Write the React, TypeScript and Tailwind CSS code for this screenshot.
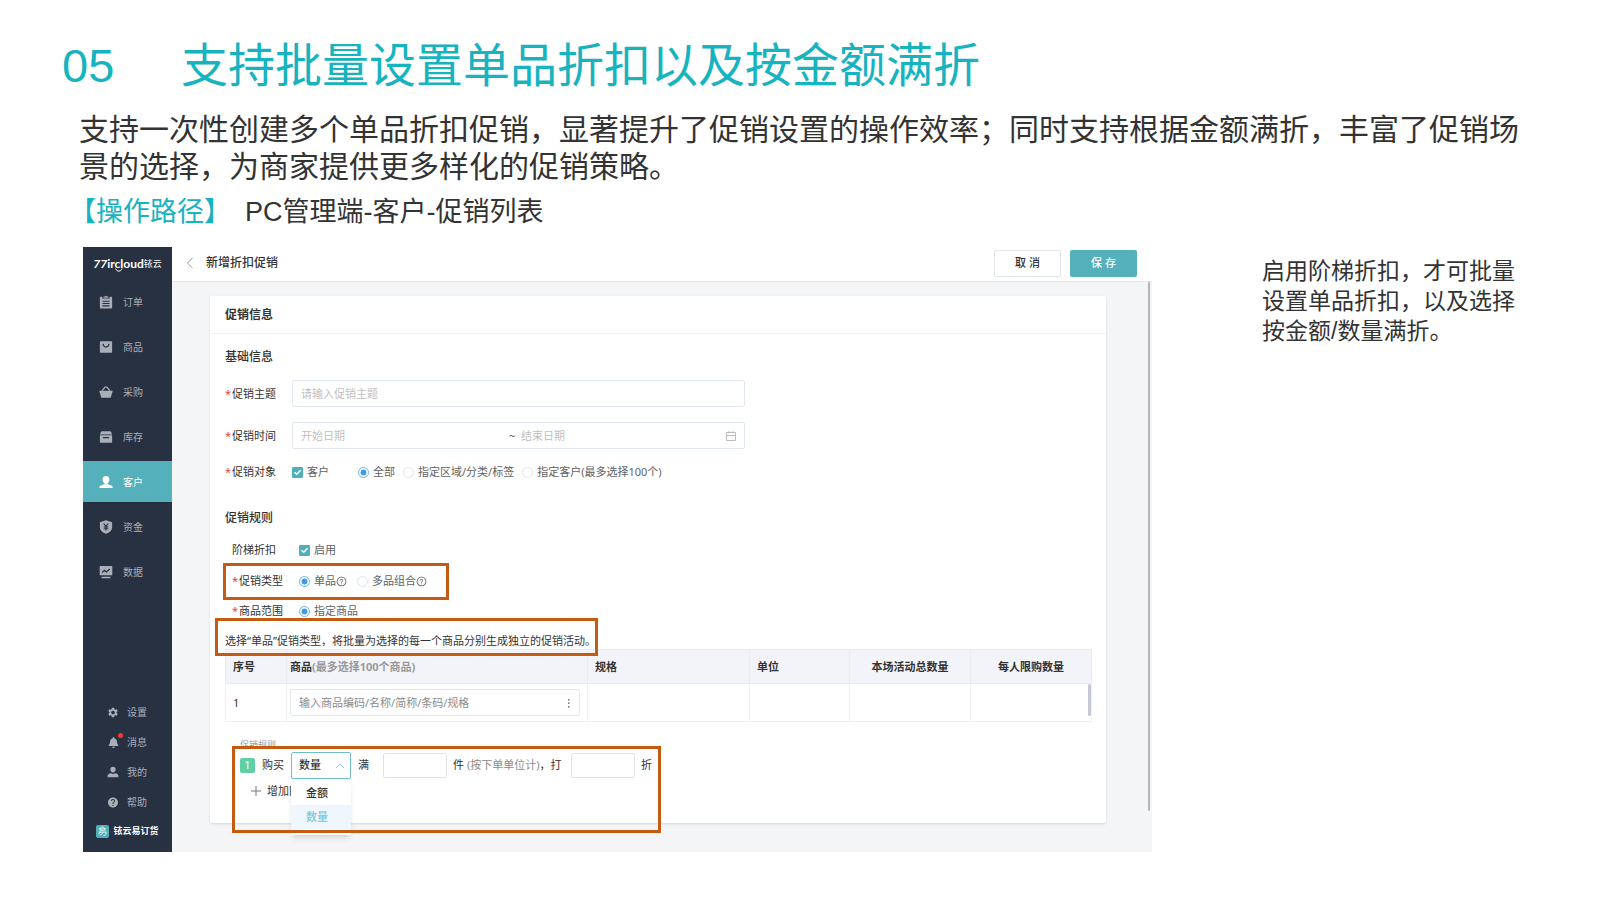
import { useState, type ReactNode } from "react";
import { FaBell } from "react-icons/fa";
import { MdHelp, MdSettings } from "react-icons/md";
import { AiOutlineQuestionCircle } from "react-icons/ai";

type MenuItem = {
    label: string;
    icon: ReactNode;
};

const mainMenu: MenuItem[] = [
    {
        label: "订单",
        icon: (
            <svg viewBox="0 0 16 16" className="size-3.5" fill="currentColor">
                <path fillRule="evenodd" d="M1.800 2h2v2h8.400V2h2a.8.8 0 0 1 .8.8v11.600a1 1 0 0 1-1 1H2a1 1 0 0 1-1-1V2.800A.8.8 0 0 1 1.800 2ZM4 6.600v1.200h8V6.600Zm0 2.600v1.200h8V9.200Zm0 2.600V13h8v-1.200Z" />
                <path d="M5.200 1.600h1.600a1.300 1.300 0 0 1 2.400 0h1.600V3H5.200Z" />
            </svg>
        ),
    },
    {
        label: "商品",
        icon: (
            <svg viewBox="0 0 16 16" className="size-3.5" fill="currentColor">
                <path fillRule="evenodd" d="M2 1.500h12a1 1 0 0 1 1 1v11a1 1 0 0 1-1 1H2a1 1 0 0 1-1-1v-11a1 1 0 0 1 1-1Zm1.800 3.200C4.400 7.400 6 8.800 8 8.800s3.600-1.400 4.200-4.100l-1.500-.3C10.300 6.400 9.300 7.300 8 7.300S5.700 6.400 5.300 4.400Z" />
            </svg>
        ),
    },
    {
        label: "采购",
        icon: (
            <svg viewBox="0 0 16 16" className="size-3.5" fill="currentColor">
                <path d="M.5 6.500h15v2H15l-1.300 5.200a1.500 1.500 0 0 1-1.400 1H3.700a1.500 1.500 0 0 1-1.400-1L1 8.500H.5Z" />
                <path d="M3.500 6.500 7 2.500h2l3.500 4" fill="none" stroke="currentColor" strokeWidth="1.500" />
            </svg>
        ),
    },
    {
        label: "库存",
        icon: (
            <svg viewBox="0 0 16 16" className="size-3.5" fill="currentColor">
                <path d="M3.200 1.500h9.600a1 1 0 0 1 .9.600L15 5H1l1.300-2.900a1 1 0 0 1 .9-.6Z" />
                <path fillRule="evenodd" d="M1 6h14v7.500a1 1 0 0 1-1 1H2a1 1 0 0 1-1-1Zm3.500 2v1.500h7V8Z" />
            </svg>
        ),
    },
    {
        label: "客户",
        icon: (
            <svg viewBox="0 0 16 16" className="size-3.5" fill="currentColor">
                <path d="M8 1a3.900 3.900 0 0 1 3.900 4c0 1.900-.9 3.700-2.200 4.500v.9l4.800 1.900c.6.3 1 .8 1 1.400v1.100H.5v-1.100c0-.6.4-1.100 1-1.400l4.800-1.900v-.9C5 8.700 4.100 6.900 4.100 5A3.900 3.900 0 0 1 8 1Z" />
            </svg>
        ),
    },
    {
        label: "资金",
        icon: (
            <svg viewBox="0 0 16 16" className="size-3.5" fill="currentColor">
                <path d="M8 .3 15 2.600v5.700c0 3.500-2.800 6-7 7.500-4.200-1.500-7-4-7-7.500V2.600Z" />
                <path d="M5.300 4 8 7.300 10.700 4M8 7.300V12M5.300 8h5.400M5.300 10h5.400" fill="none" stroke="#273142" strokeWidth="1.300" />
            </svg>
        ),
    },
    {
        label: "数据",
        icon: (
            <svg viewBox="0 0 16 16" className="size-3.5" fill="currentColor">
                <path d="M1.500 1h13a.7.7 0 0 1 .7.700v10.100H.8V1.700a.7.7 0 0 1 .7-.7ZM3 13.500h10V15H3Z" />
                <path d="M3.500 8.500 6.300 6l2.200 2 3.800-3.500" fill="none" stroke="#273142" strokeWidth="1.400" />
            </svg>
        ),
    },
];

const footMenu: MenuItem[] = [
    { label: "设置", icon: <MdSettings className="size-[13px]" /> },
    { label: "消息", icon: <FaBell className="size-[11px]" /> },
    {
        label: "我的",
        icon: (
            <svg viewBox="0 0 16 16" className="size-3" fill="currentColor">
                <path d="M8 1a3.500 3.500 0 0 1 3.500 3.600C11.500 6.800 10 8.500 8 8.500S4.500 6.800 4.500 4.600A3.500 3.500 0 0 1 8 1ZM.8 15v-1.800C.8 11 3 10 5.500 9.600 6.200 10.200 7 10.500 8 10.500s1.800-.3 2.500-.9c2.500.4 4.700 1.400 4.700 3.600V15Z" />
            </svg>
        ),
    },
    { label: "帮助", icon: <MdHelp className="size-[13px]" /> },
];

const targets = ["全部", "指定区域/分类/标签", "指定客户(最多选择100个)"];
const promoTypes = ["单品", "多品组合"];

const Highlight = ({ className }: { className: string }) => (
    <span aria-hidden="true" className={`pointer-events-none absolute z-20 border-3 border-[#c55a11] ${className}`} />
);

const Label = ({ children, required = true, className = "w-[67px]" }: { children: ReactNode; required?: boolean; className?: string }) => (
    <span className={`flex shrink-0 items-center text-[#333] ${className}`}>
        <span className="w-[7px] text-[#f04040]">{required ? "*" : ""}</span>
        {children}
    </span>
);

const Checkbox = ({ label }: { label: string }) => (
    <label className="flex items-center gap-1 text-[#606266]">
        <span className="grid size-[11px]">
            <input type="checkbox" defaultChecked className="size-[11px] appearance-none rounded-[1px] border border-[#d5dcea] [grid-area:1/1] checked:border-[#4fb0bb] checked:bg-[#4fb0bb]" />
            <svg viewBox="0 0 11 11" className="pointer-events-none size-[11px] [grid-area:1/1]">
                <path d="M2.500 5.200 4.700 7.300 8.600 3.300" fill="none" stroke="#fff" strokeWidth="1.500" />
            </svg>
        </span>
        {label}
    </label>
);

type RadioProps = {
    name: string;
    label: string;
    checked: boolean;
    onChange: () => void;
    help?: boolean;
};

const Radio = ({ name, label, checked, onChange, help }: RadioProps) => (
    <label className="flex items-center gap-1 whitespace-nowrap text-[#606266]">
        <input
            type="radio"
            name={name}
            checked={checked}
            onChange={onChange}
            className="size-[11px] appearance-none rounded-full border border-[#dde3ef] checked:border-[#6db4ee] checked:bg-[radial-gradient(circle,#3f9ae6_42%,#ffffff_52%)]"
        />
        <span className="flex items-center">
            {label}
            {help && <AiOutlineQuestionCircle className="size-[11px]" />}
        </span>
    </label>
);

const Sidebar = () => (
    <aside className="flex w-[89px] shrink-0 flex-col bg-[#273142] text-[10px] text-[#a9aeb7]">
        <div className="flex h-[34px] items-center justify-center text-white">
            <span className="relative font-[Lato,'Noto_Sans',sans-serif] text-[12px] leading-4 font-bold">
                <i>77</i>ircloud
                <svg viewBox="0 0 8 4" className="absolute bottom-0 left-[22px] h-1 w-2">
                    <path d="M.5.5C2 4 6 4 7 .5" fill="none" stroke="#fff" />
                </svg>
            </span>
            <span className="text-[9px]">铱云</span>
        </div>
        <nav className="flex flex-col gap-1">
            {mainMenu.map((item) => (
                <a
                    key={item.label}
                    href="#"
                    className={`flex h-[41px] items-center gap-2.5 pl-4 ${item.label === "客户" ? "bg-[#54b0bb] text-white" : ""}`}
                >
                    {item.icon}
                    {item.label}
                </a>
            ))}
        </nav>
        <div className="mt-auto pb-[7px]">
            {footMenu.map((item) => (
                <a key={item.label} href="#" className="flex h-[30px] items-center gap-2 pl-6">
                    <span className="relative flex w-3 justify-center">
                        {item.icon}
                        {item.label === "消息" && <span className="absolute -top-1 -right-1 size-[5px] rounded-full bg-[#f5392f]" />}
                    </span>
                    {item.label}
                </a>
            ))}
            <div className="flex h-7 items-center justify-center gap-1 text-[9px] font-bold text-white">
                <svg viewBox="0 0 13 13" className="size-[13px]">
                    <rect width="13" height="13" rx="2" fill="#4fb0bb" />
                    <path d="M4 5.200a2.500 2.500 0 1 1 4.800 0H4M3 3.800h6.500M2.500 7h8M5 7l-2.500 2M7.500 7 4 10.500M10.200 7c0 2.500-.7 3.500-2.700 3.500" fill="none" stroke="#fff" strokeWidth=".8" />
                </svg>
                铱云易订货
            </div>
        </div>
    </aside>
);

const PromotionForm = () => {
    const [target, setTarget] = useState(targets[0]);
    const [promoType, setPromoType] = useState(promoTypes[0]);
    const [unit, setUnit] = useState("数量");

    return (
        <section className="mt-3.5 mr-[46px] mb-[29px] ml-[38px] rounded-xs bg-white shadow-sm">
            <h2 className="flex h-[38px] items-center border-b border-[#eff1f4] px-[15px] text-[12px] font-bold text-[#333]">促销信息</h2>
            <div className="px-[15px] pt-[15px] pb-6">
                <h3 className="text-[12px] leading-4 font-medium text-[#333]">基础信息</h3>
                <div className="mt-[15px] flex items-center">
                    <Label>促销主题</Label>
                    <input
                        type="text"
                        aria-label="促销主题"
                        placeholder="请输入促销主题"
                        className="h-[27px] w-[453px] rounded-xs border border-[#e2e8f0] px-2 placeholder:text-[#bfbfbf]"
                    />
                </div>
                <div className="mt-[15px] flex items-center">
                    <Label>促销时间</Label>
                    <div className="flex h-[27px] w-[453px] items-center rounded-xs border border-[#e2e8f0] px-2">
                        <input type="text" aria-label="开始日期" placeholder="开始日期" className="w-[208px] placeholder:text-[#bfbfbf]" />
                        <span className="w-3 text-[#555]">~</span>
                        <input type="text" aria-label="结束日期" placeholder="结束日期" className="min-w-0 flex-1 placeholder:text-[#bfbfbf]" />
                        <svg viewBox="0 0 10 10" className="size-[10px]" fill="none" stroke="#bcbcbc">
                            <path d="M.5 1.500h9v8h-9zM.5 4.500h9M3 0v2.500M7 0v2.500" />
                        </svg>
                    </div>
                </div>
                <div className="mt-[13px] flex h-5 items-center">
                    <Label>促销对象</Label>
                    <Checkbox label="客户" />
                    <div className="ml-[29px] flex gap-2">
                        {targets.map((t) => (
                            <Radio key={t} name="target" label={t} checked={target === t} onChange={() => setTarget(t)} />
                        ))}
                    </div>
                </div>

                <h3 className="mt-7 text-[12px] leading-4 font-medium text-[#333]">促销规则</h3>
                <div className="mt-3.5 flex h-5 items-center">
                    <Label required={false} className="w-[74px]">阶梯折扣</Label>
                    <Checkbox label="启用" />
                </div>
                <div className="relative mt-[11px] flex h-5 items-center pl-[7px]">
                    <Label>促销类型</Label>
                    <div className="flex gap-2.5">
                        {promoTypes.map((t) => (
                            <Radio key={t} name="type" label={t} checked={promoType === t} onChange={() => setPromoType(t)} help />
                        ))}
                    </div>
                    <Highlight className="-top-2 -left-0.5 h-[37px] w-[226px]" />
                </div>
                <div className="mt-2.5 flex h-5 items-center pl-[7px]">
                    <Label>商品范围</Label>
                    <Radio name="range" label="指定商品" checked onChange={() => {}} />
                </div>
                <div className="relative mt-3 h-4">
                    <p className="leading-4 whitespace-nowrap text-[#333]">选择“单品”促销类型，将批量为选择的每一个商品分别生成独立的促销活动。</p>
                    <Highlight className="-top-[15px] -left-2.5 h-[38px] w-[383px]" />
                </div>

                <div className="relative">
                    <table className="w-full table-fixed border-collapse text-left text-[#333]">
                        <colgroup>
                            <col className="w-[61px]" />
                            <col className="w-[301px]" />
                            <col className="w-[162px]" />
                            <col className="w-[100px]" />
                            <col className="w-[121px]" />
                            <col className="w-[121px]" />
                        </colgroup>
                        <thead>
                            <tr className="h-[34px] bg-[#f3f4f9] [&>th]:border [&>th]:border-[#e8ebf2] [&>th]:px-[7px]">
                                <th>序号</th>
                                <th className="px-[3px]!">商品<span className="text-[#999]">(最多选择100个商品)</span></th>
                                <th>规格</th>
                                <th>单位</th>
                                <th className="text-center">本场活动总数量</th>
                                <th className="text-center">每人限购数量</th>
                            </tr>
                        </thead>
                        <tbody>
                            <tr className="h-[38px] [&>td]:border [&>td]:border-[#eef0f6] [&>td]:px-[7px]">
                                <td>1</td>
                                <td className="pl-[3px]!">
                                    <div className="flex h-[27px] items-center rounded-xs border border-[#e2e8f0] px-2">
                                        <input type="text" aria-label="商品" placeholder="输入商品编码/名称/简称/条码/规格" className="min-w-0 flex-1 placeholder:text-[#8c8c8c]" />
                                        <svg viewBox="0 0 4 10" className="h-2.5 w-1" fill="#777">
                                            <path d="M1 1h1.500v1.500H1zM1 4.500h1.500V6H1zM1 8h1.500v1.500H1z" />
                                        </svg>
                                    </div>
                                </td>
                                <td />
                                <td />
                                <td />
                                <td />
                            </tr>
                        </tbody>
                    </table>
                    <span className="absolute right-0 bottom-1.5 h-8 w-[3px] rounded-full bg-[#c3c8d2]" />
                </div>

                <div className="relative mt-[17px] pl-[15px]">
                    <p className="text-[9px] leading-3 text-[#999]">促销规则</p>
                    <div className="flex h-7 items-center text-[#333]">
                        <span className="mr-[7px] flex size-[15px] items-center justify-center rounded-xs bg-[#5fd0a5] text-white">1</span>
                        购买
                        <div className="relative ml-[7px] w-[60px]">
                            <select
                                aria-label="条件"
                                value={unit}
                                onChange={(e) => setUnit(e.target.value)}
                                className="block h-[27px] w-full appearance-none rounded-xs border border-[#6fbfc8] bg-white px-[7px] font-medium"
                            >
                                <option>金额</option>
                                <option>数量</option>
                            </select>
                            <svg viewBox="0 0 10 6" className="pointer-events-none absolute top-[11px] right-1.5 h-1.5 w-2.5" fill="none" stroke="#92cdea">
                                <path d="m1 5 4-4 4 4" />
                            </svg>
                            <ul role="listbox" className="absolute top-full left-0 z-10 w-full bg-white pt-0.5 pb-1.5 font-medium shadow-md">
                                {["金额", "数量"].map((o) => (
                                    <li
                                        key={o}
                                        role="option"
                                        aria-selected={unit === o}
                                        onClick={() => setUnit(o)}
                                        className={`h-6 pl-[15px] leading-6 ${unit === o ? "bg-[#eff6fd] text-[#6ccbd9]" : ""}`}
                                    >
                                        {o}
                                    </li>
                                ))}
                            </ul>
                        </div>
                        <span className="w-8 pl-[7px]">满</span>
                        <input type="text" aria-label="满" className="h-[25px] w-16 rounded-xs border border-[#e0e3e8]" />
                        <span className="ml-1.5 w-[118px] whitespace-nowrap">件 <span className="text-[#8c8c8c]">(按下单单位计)</span>，打</span>
                        <input type="text" aria-label="折" className="h-[25px] w-16 rounded-xs border border-[#e0e3e8]" />
                        <span className="pl-1.5">折</span>
                    </div>
                    <button type="button" className="mt-1 ml-[11px] flex h-4 items-center gap-1.5 text-[#333]">
                        <svg viewBox="0 0 10 10" className="size-[10px]" stroke="#777">
                            <path d="M5 0v10M0 5h10" />
                        </svg>
                        增加区间
                    </button>
                    <Highlight className="top-[7px] left-[7px] h-[87px] w-[429px]" />
                </div>
            </div>
        </section>
    );
};

const App = () => {
    return (
        <div className="min-h-screen bg-white pt-[42px] font-['Liberation_Sans','Noto_Sans_CJK_SC',sans-serif] text-[#333]">
            <h1 className="flex pl-[62px] text-[47px] leading-[48px] text-[#17b3bf]">
                <span className="w-[119px]">05</span>
                支持批量设置单品折扣以及按金额满折
            </h1>
            <p className="mt-[21px] pr-[72px] pl-[79px] text-[30px] leading-[37px]">
                支持一次性创建多个单品折扣促销，显著提升了促销设置的操作效率；同时支持根据金额满折，丰富了促销场景的选择，为商家提供更多样化的促销策略。
            </p>
            <p className="mt-[9px] flex gap-3.5 pl-[69px] text-[27px] leading-9">
                <span className="text-[#17b3bf]">【操作路径】</span>
                PC管理端-客户-促销列表
            </p>

            <main className="mt-[17px] flex items-start pr-20 pl-[83px]">
                <div className="flex min-w-0 flex-1 bg-[#f4f5f7] font-['Noto_Sans','Noto_Sans_CJK_SC',sans-serif] text-[11px] leading-4">
                    <Sidebar />
                    <div className="relative min-w-0 flex-1">
                        <header className="flex h-[35px] items-center border-b border-[#e4e6e9] bg-white pr-[15px] pb-0.5 pl-3.5">
                            <svg viewBox="0 0 8 14" className="h-3 w-2" fill="none" stroke="#888">
                                <path d="M7 1 1 7l6 6" />
                            </svg>
                            <h2 className="ml-3 flex-1 text-[12px] font-medium">新增折扣促销</h2>
                            <button type="button" className="h-[27px] w-[67px] rounded-xs border border-[#e4e6ec] bg-white font-medium">取 消</button>
                            <button type="button" className="ml-[9px] h-[27px] w-[67px] rounded-xs bg-[#54b0bb] font-medium text-white">保 存</button>
                        </header>
                        <PromotionForm />
                        <span className="absolute top-[35px] right-0.5 bottom-[41px] w-0.5 rounded-full bg-[#b4b6b9]" />
                    </div>
                </div>
                <p className="ml-[110px] w-[258px] shrink-0 pt-[9px] text-[23px] leading-[30px]">
                    启用阶梯折扣，才可批量设置单品折扣，以及选择按金额/数量满折。
                </p>
            </main>
        </div>
    );
};

export default App;
